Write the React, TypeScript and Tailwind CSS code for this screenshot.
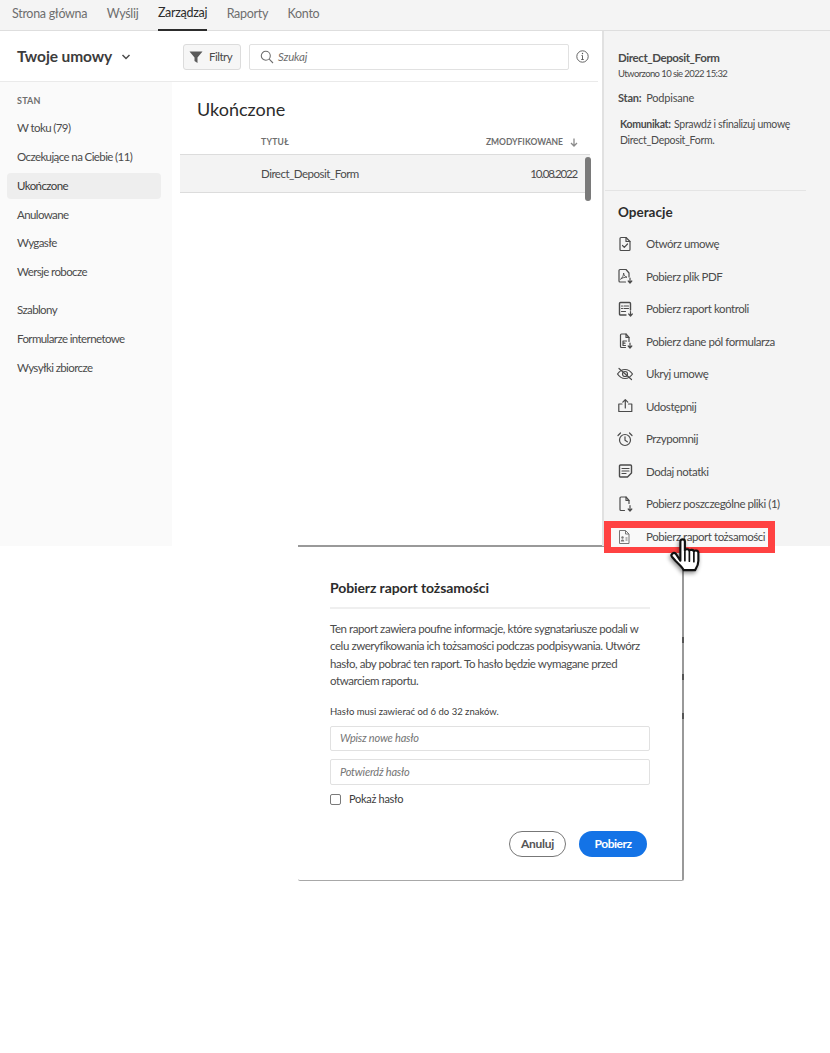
import React from "react";

const font = { fontFamily: '"Lato", "Liberation Sans", sans-serif' };

const S = ({ children }: { children: React.ReactNode }) => (
  <svg width="20" height="20" viewBox="0 0 20 20" fill="none" stroke="#4b4b4b" strokeWidth="1.2" strokeLinecap="round" strokeLinejoin="round">
    {children}
  </svg>
);

const icons: Record<string, React.ReactNode> = {
  open: (
    <S>
      <path d="M6 3.500a1 1 0 0 0-1 1v11a1 1 0 0 0 1 1h8a1 1 0 0 0 1-1V7.500l-4-4z" />
      <path d="M11 3.500v4h4" />
      <path d="M7.500 11.500l1.800 1.800 3.200-3.300" />
    </S>
  ),
  pdf: (
    <S>
      <path d="M10.500 16H5a1 1 0 0 1-1-1V4.500a1 1 0 0 1 1-1h6l3 3.500v4" />
      <path d="M5.800 13c1.500-1 2.800-3.300 2.800-6 .5 2.500 1.500 3.800 3.400 4.200-2.200 0-4.500.4-6.200 1.800z" strokeWidth="0.9" />
      <path d="M15 12v5M13.200 15 15 17l1.800-2" />
    </S>
  ),
  audit: (
    <S>
      <path d="M11 16H5.500a1 1 0 0 1-1-1V4.500a1 1 0 0 1 1-1h9a1 1 0 0 1 1 1V11" strokeWidth="1.400" />
      <path d="M9 7h4.500M9 9.500h4.500M6.500 7h1M6.500 9.500h1M6.500 12.500h4" />
      <path d="M15.500 12.500V17M13.700 15l1.800 2 1.800-2" />
    </S>
  ),
  fields: (
    <S>
      <path d="M10.500 16.500H6.500a1 1 0 0 1-1-1V4a1 1 0 0 1 1-1H11l3 3.500v4" />
      <path d="M11 3v3.500h3" />
      <path d="M11.500 10H8v4.500h2.500M8 12.200h2" />
      <path d="M15 12v5M13.200 15 15 17l1.800-2" />
    </S>
  ),
  hide: (
    <S>
      <path d="M2.500 10c2-3 4.500-4.500 7.500-4.500s5.500 1.500 7.500 4.500c-2 3-4.500 4.500-7.500 4.500S4.500 13 2.500 10z" />
      <circle cx="10" cy="10" r="2.500" />
      <path d="M4 4.500l12.500 11" />
    </S>
  ),
  share: (
    <S>
      <path d="M7 8H3.800v7.500h13V8H13.500" />
      <path d="M10.300 12V4M7.800 6.200l2.500-2.500 2.500 2.500" />
    </S>
  ),
  remind: (
    <S>
      <circle cx="10" cy="11" r="5.500" />
      <path d="M10 7.800V11.300l2.300 1.500" />
      <path d="M3 6.500 5.500 4M17 6.500 14.500 4" />
    </S>
  ),
  note: (
    <S>
      <path d="M12.500 16H5.500a1 1 0 0 1-1-1V5a1 1 0 0 1 1-1h10a1 1 0 0 1 1 1v7z" strokeWidth="1.400" />
      <path d="M7 7.500h7M7 10h7M7 12.500h4" />
    </S>
  ),
  files: (
    <S>
      <path d="M9.500 16.500H6a1 1 0 0 1-1-1V4a1 1 0 0 1 1-1h5l3 3.500v3" />
      <path d="M11 3v3.500h3" />
      <path d="M15 11.500V17M13.200 15 15 17l1.800-2" />
    </S>
  ),
  id: (
    <svg width="20" height="20" viewBox="0 0 20 20" fill="none" stroke="#777" strokeWidth="1" strokeLinejoin="round">
      <path d="M5.500 3.500h6l3.500 3.500v9.500h-9.500z" />
      <path d="M11.500 3.500V7H15" />
      <circle cx="8.500" cy="10.500" r="1.200" fill="#777" stroke="none" />
      <path d="M6.800 14.500c0-1.500 1-2 1.700-2s1.700.5 1.700 2z" fill="#777" stroke="none" />
      <path d="M11.500 11h2M11.500 13h2" />
    </svg>
  ),
};

const actions: [string, string][] = [
  ["open", "Otwórz umowę"],
  ["pdf", "Pobierz plik PDF"],
  ["audit", "Pobierz raport kontroli"],
  ["fields", "Pobierz dane pól formularza"],
  ["hide", "Ukryj umowę"],
  ["share", "Udostępnij"],
  ["remind", "Przypomnij"],
  ["note", "Dodaj notatki"],
  ["files", "Pobierz poszczególne pliki (1)"],
];

const side = ["W toku (79)", "Oczekujące na Ciebie (11)", "Ukończone", "Anulowane", "Wygasłe", "Wersje robocze"];
const side2 = ["Szablony", "Formularze internetowe", "Wysyłki zbiorcze"];

const sideClass = (t: string) =>
  t === "Ukończone"
    ? "ml-[7px] mr-[11px] my-[1.500px] flex h-[26px] items-center rounded-[4px] bg-[#eeeeee] pl-[10px] text-[#3a3a3a]"
    : t === "Wygasłe"
      ? "flex h-[28px] items-center pl-[17px]"
      : "flex h-[29px] items-center pl-[17px]";

export default function App() {
  return (
    <div className="relative w-[830px] h-[1053px] overflow-hidden bg-white text-[#4b4b4b]" style={font}>
      <div className="flex flex-col h-[546px]">
        <nav className="flex h-[31px] shrink-0 items-stretch gap-[19.500px] border-b border-[#dedede] bg-[#f4f4f4] pl-[12px] text-[12.500px] tracking-[-0.3px]">
          {["Strona główna", "Wyślij", "Zarządzaj", "Raporty", "Konto"].map((t) => (
            <a key={t} className={t === "Zarządzaj" ? "flex items-center pb-[2px] text-[#2c2c2c] border-b-2 border-[#2c2c2c] h-[31px]" : "flex items-center pb-[2px] text-[#6e6e6e]"}>
              {t}
            </a>
          ))}
        </nav>
        <div className="flex flex-1 min-h-0">
          <div className="flex w-[602px] shrink-0 flex-col">
            <div className="flex h-[51px] shrink-0 items-center border-b border-[#eaeaea] pt-[1px] mr-[4px]">
              <div className="flex w-[183px] items-center pl-[17px] text-[15.500px] font-bold tracking-[-0.1px] text-[#3c3c3c]">
                Twoje umowy
                <svg className="ml-[9px] mt-[1px]" width="10" height="8" viewBox="0 0 10 8" fill="none" stroke="#4b4b4b" strokeWidth="1.500">
                  <path d="M1.500 2 5 5.500 8.500 2" />
                </svg>
              </div>
              <button className="flex h-[26px] w-[58px] items-center rounded-[3px] border border-[#dcdcdc] bg-[#f6f6f6] pl-[5px] text-[11.500px] tracking-[-0.5px] text-[#4b4b4b]">
                <svg width="14" height="14" viewBox="0 0 14 14" fill="#5a5a5a"><path d="M0.500 1.500h13L8.500 7.500v5.500l-3-2V7.500z" /></svg>
                <span className="ml-[6px]">Filtry</span>
              </button>
              <div className="ml-[8px] flex h-[26px] w-[320px] items-center rounded-[2px] border border-[#e1e1e1] bg-white pl-[10px] text-[11.500px] tracking-[-0.2px] italic text-[#6e6e6e]">
                <svg width="14" height="14" viewBox="0 0 14 14" fill="none" stroke="#6e6e6e" strokeWidth="1.100"><circle cx="5.800" cy="5.800" r="4.500" /><path d="M9.200 9.200 13 13" /></svg>
                <span className="ml-[4px]">Szukaj</span>
              </div>
              <svg className="ml-[7px]" width="13" height="13" viewBox="0 0 13 13" fill="none" stroke="#555"><circle cx="6.500" cy="6.500" r="5.700" strokeWidth="0.900" /><path d="M6.500 5.500v4M5.200 9.500h2.600M5.500 5.500h1" strokeWidth="0.900" /><circle cx="6.500" cy="3.500" r="0.700" fill="#555" stroke="none" /></svg>
            </div>
            <div className="flex flex-1 min-h-0">
              <aside className="w-[172px] shrink-0 bg-[#fafafa] pt-[14px] text-[11.500px] tracking-[-0.6px]">
                <div className="pl-[17px] text-[9px] font-bold tracking-[0.2px] text-[#6e6e6e] h-[16px] leading-[10px]">STAN</div>
                <div className="mt-[1px] flex flex-col">
                  {side.map((t) => (
                    <div key={t} className={sideClass(t)}>{t}</div>
                  ))}
                </div>
                <div className="mt-[9px] flex flex-col">
                  {side2.map((t) => (
                    <div key={t} className="flex h-[29px] items-center pl-[17px]">{t}</div>
                  ))}
                </div>
              </aside>
              <main className="relative flex-1 pt-[15px]">
                <h1 className="pl-[25px] text-[18px] leading-[24px] text-[#2c2c2c]">Ukończone</h1>
                <div className="ml-[8px] mr-[12px] mt-[15px] flex h-[18px] items-start justify-between pl-[81px] pr-[12px] text-[8.500px] font-bold text-[#6e6e6e]">
                  <span className="tracking-[0.3px]">TYTUŁ</span>
                  <span className="flex items-center">
                    ZMODYFIKOWANE
                    <svg className="ml-[7px]" width="8" height="9" viewBox="0 0 8 9" fill="none" stroke="#8a8a8a" strokeWidth="1.300"><path d="M4 0.500v7M1 5l3 3 3-3" /></svg>
                  </span>
                </div>
                <div className="ml-[8px] mr-[12px] flex h-[39px] items-center justify-between border-y border-[#dcdcdc] bg-[#f3f3f3] pl-[81px] pr-[13px] text-[11.500px]">
                  <span className="tracking-[-0.5px]">Direct_Deposit_Form</span>
                  <span className="tracking-[-1.200px]">10.08.2022</span>
                </div>
                <div className="absolute right-[11px] top-[75px] h-[44px] w-[6px] rounded-[3px] bg-[#7a7a7a]" />
              </main>
            </div>
          </div>
          <section className="flex-1 border-l-2 border-[#e1e1e1] bg-[#f4f4f4] pl-[14px] text-[#4b4b4b]">
            <div className="pt-[20px] h-[159px]">
              <div className="text-[11.500px] font-bold tracking-[-0.4px] leading-[14px] text-[#4b4b4b]">Direct_Deposit_Form</div>
              <div className="mt-[2px] text-[9.500px] tracking-[-0.6px] leading-[14px]">Utworzono 10 sie 2022 15:32</div>
              <div className="mt-[9px] text-[11px] tracking-[-0.2px] leading-[16px]"><span className="font-bold">Stan:</span> <span className="ml-[2px]">Podpisane</span></div>
              <div className="mt-[10px] ml-[2px] w-[185px] text-[10.500px] tracking-[-0.3px] leading-[16px]"><span className="font-bold">Komunikat:</span> <span className="ml-[1px]">Sprawdź i sfinalizuj umowę Direct_Deposit_Form.</span></div>
            </div>
            <div className="-ml-[13px] mr-[24px] border-t border-[#e4e4e4]" />
            <div className="mt-[11px] text-[13.500px] font-bold leading-[20px] text-[#2c2c2c]">Operacje</div>
            <div className="mt-[5.500px] flex flex-col text-[11.500px] tracking-[-0.45px]">
              {actions.map(([i, t]) => (
                <div key={t} className="flex h-[32.500px] items-center">
                  <span className="flex w-[28px] -ml-[3px] mr-[3px]">{icons[i]}</span>
                  {t}
                </div>
              ))}
            </div>
          </section>
        </div>
      </div>

      {/* podświetlony wiersz */}
      <div className="absolute left-[604px] top-[521px] flex h-[32px] w-[171px] items-center whitespace-nowrap border-[7px] border-b-[6px] border-[#ff4242] bg-[#f9f9f9] pb-[2px] text-[11.500px] tracking-[-0.45px] text-[#4b4b4b]">
        <span className="ml-[3px] mr-[12px] flex w-[20px]">{icons.id}</span>
        Pobierz raport tożsamości
      </div>
      {/* kursor */}
      <svg className="absolute left-[668px] top-[538px] drop-shadow-[-1px_2px_2px_rgba(0,0,0,0.45)]" width="36" height="43" viewBox="0 0 32 38" strokeLinejoin="round" strokeLinecap="round">
        <path d="M11 3c0-2.500 4-2.500 4 0V11c0-1.500 4-1.500 4 .5 0-1.500 4-1.500 4 .5 0-1.500 4-1.500 4 1v7c0 4-1.500 6-3 8.500H14c-1.500-3-4-5-7-8l-3.500-4c-1.500-2 1.500-4.500 3.500-2.500L11 20z" fill="#fff" stroke="#111" strokeWidth="1.900" />
        <path d="M15 12v8M19 12.500v8M23 13v8" stroke="#111" strokeWidth="1.500" fill="none" />
      </svg>
      {/* znaczniki na krawędzi okna */}
      {[637, 674, 713].map((y) => (
        <div key={y} className="absolute left-[682px] h-[6px] w-[2px] bg-[#555]" style={{ top: y }} />
      ))}

      {/* okno dialogowe */}
      <div className="-mt-[1px] ml-[298px] h-[336px] w-[386px] rounded-b-[2px] border-t-2 border-b border-r-2 border-t-[#999] border-b-[#a8a8a8] border-r-[#999] bg-white pl-[32px] pr-[32px] pt-[31px]">
        <h2 className="text-[14px] font-bold tracking-[-0.1px] leading-[20px] text-[#2c2c2c]">Pobierz raport tożsamości</h2>
        <div className="mt-[9px] border-t-2 border-[#efefef]" />
        <p className="mt-[11px] text-[11.500px] tracking-[-0.43px] leading-[17.300px] text-[#4b4b4b]">
          Ten raport zawiera poufne informacje, które sygnatariusze podali w celu zweryfikowania ich tożsamości podczas podpisywania. Utwórz hasło, aby pobrać ten raport. To hasło będzie wymagane przed otwarciem raportu.
        </p>
        <p className="mt-[16px] text-[9.500px] leading-[14px] text-[#3c3c3c]">Hasło musi zawierać od 6 do 32 znaków.</p>
        <div className="mt-[7px] flex h-[25px] items-center rounded-[2px] border border-[#e1e1e1] pl-[9px] text-[11px] tracking-[-0.2px] italic text-[#757575]">Wpisz nowe hasło</div>
        <div className="mt-[8px] flex h-[26px] items-center rounded-[2px] border border-[#e1e1e1] pl-[9px] text-[11px] tracking-[-0.2px] italic text-[#757575]">Potwierdź hasło</div>
        <label className="mt-[6px] flex items-center text-[11px] tracking-[-0.3px] text-[#3c3c3c]">
          <span className="h-[11px] w-[11px] rounded-[2px] border border-[#7a7a7a] bg-white" />
          <span className="ml-[8px]">Pokaż hasło</span>
        </label>
        <div className="mt-[23px] flex justify-end gap-[13px] pr-[3px]">
          <button className="h-[26px] w-[57px] rounded-full border border-[#777] bg-white text-[12px] tracking-[-0.3px] font-bold text-[#555]">Anuluj</button>
          <button className="h-[26px] w-[68px] rounded-full bg-[#1473e6] text-[12px] tracking-[-0.5px] font-bold text-white">Pobierz</button>
        </div>
      </div>
    </div>
  );
}
